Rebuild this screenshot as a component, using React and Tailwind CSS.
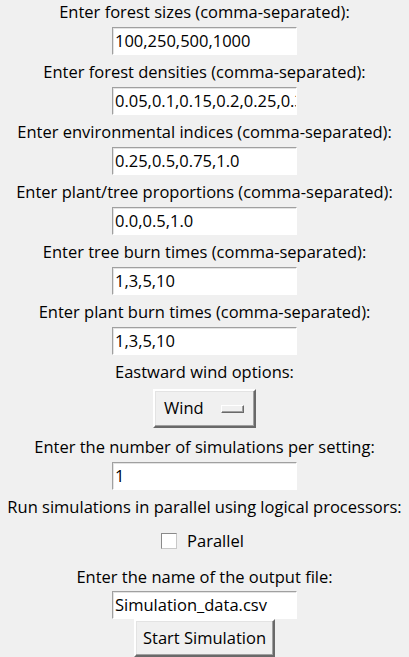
import React from "react";

const Label = ({ children }) => (
  <div className="h-[27px] pt-[1px] leading-[21px] whitespace-nowrap text-black">{children}</div>
);

const Entry = ({ value }) => (
  <div className="w-[185px] h-[28px] shrink-0 bg-white border border-t-[#a0a0a0] border-l-[#a0a0a0] border-r-white border-b-white shadow-[inset_1px_1px_0_#e3e3e3] overflow-hidden whitespace-nowrap pl-[2px] leading-[26px] text-black">
    {value}
  </div>
);

const Block = ({ label, value }) => (
  <div className="flex flex-col items-center mb-[5px]">
    <Label>{label}</Label>
    <Entry value={value} />
  </div>
);

export default function App() {
  return (
    <div
      className="w-[409px] h-[657px] overflow-hidden bg-[#f0f0f0] flex flex-col items-center text-[16.5px]"
      style={{ fontFamily: '"Open Sans", "Noto Sans", sans-serif' }}
    >
      <Block label="Enter forest sizes (comma-separated):" value="100,250,500,1000" />
      <Block
        label="Enter forest densities (comma-separated):"
        value="0.05,0.1,0.15,0.2,0.25,0.3,0.35,0.4,0.45,0.5,0.55,0.6,0.65,0.7,0.75,0.8,0.85,0.9,0.95"
      />
      <Block label="Enter environmental indices (comma-separated):" value="0.25,0.5,0.75,1.0" />
      <Block label="Enter plant/tree proportions (comma-separated):" value="0.0,0.5,1.0" />
      <Block label="Enter tree burn times (comma-separated):" value="1,3,5,10" />
      <Block label="Enter plant burn times (comma-separated):" value="1,3,5,10" />

      <Label>Eastward wind options:</Label>
      <div className="mt-[3px] mb-[7px] w-[103px] h-[39px] shrink-0 flex items-center justify-between pl-[9px] pr-[10px] border-2 border-t-white border-l-white border-r-[#696969] border-b-[#696969] shadow-[inset_-1px_-1px_0_#a0a0a0,inset_1px_1px_0_#e3e3e3] text-black">
        <span>Wind</span>
        <span className="w-[23px] h-[8px] border border-t-white border-l-white border-r-[#696969] border-b-[#696969] shadow-[inset_-1px_-1px_0_#a0a0a0]" />
      </div>

      <Block label="Enter the number of simulations per setting:" value="1" />

      <Label>Run simulations in parallel using logical processors:</Label>
      <div className="h-[40px] mb-[4px] shrink-0 flex items-center gap-[10px] pr-[4px] text-black">
        <span className="w-[16px] h-[16px] bg-white border border-t-[#8a8a8a] border-l-[#8a8a8a] border-r-[#c8c8c8] border-b-[#c8c8c8]" />
        <span className="leading-[20px]">Parallel</span>
      </div>

      <Label>Enter the name of the output file:</Label>
      <Entry value="Simulation_data.csv" />
      <div className="w-[141px] h-[38px] shrink-0 flex items-center justify-center border-2 border-t-white border-l-white border-r-[#696969] border-b-[#696969] shadow-[inset_-1px_-1px_0_#a0a0a0,inset_1px_1px_0_#e3e3e3] text-black whitespace-nowrap">
        Start Simulation
      </div>
    </div>
  );
}
